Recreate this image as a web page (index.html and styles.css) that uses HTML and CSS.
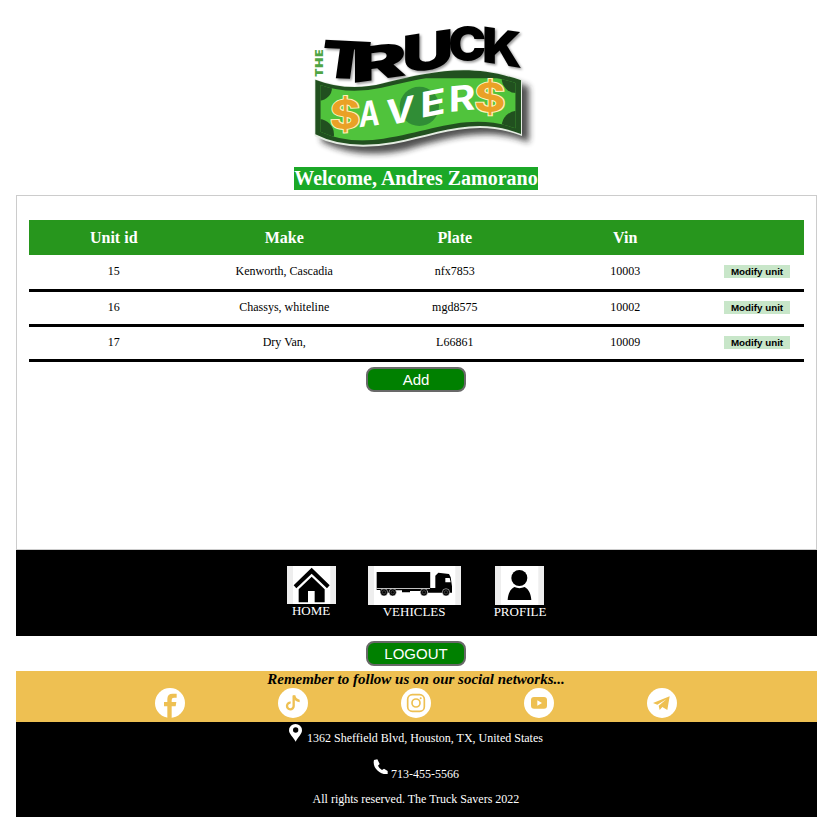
FILE: index.html
```html
<!DOCTYPE html>
<html lang="en">
<head>
<meta charset="utf-8">
<title>The Truck Savers</title>
<link rel="stylesheet" href="styles.css">
</head>
<body>
<header class="header">
  <svg class="logo" viewBox="0 0 720 450" role="img" aria-label="The Truck Savers">
    <defs>
      <filter id="soft" x="-10%" y="-20%" width="125%" height="150%"><feGaussianBlur stdDeviation="10"/></filter>
      <clipPath id="bill"><path d="M46 210Q130 240 230 218C390 183 470 155 632 204V340C490 290 380 350 235 371Q130 388 46 350Z"/></clipPath>
    </defs>
    <path d="M50 215Q170 260 300 225C430 190 520 160 672 215V382C540 328 410 375 300 405Q160 435 50 380Z" fill="#222" opacity=".8" filter="url(#soft)"/>
    <path d="M29 192Q130 230 235 203C390 164 500 143 651 194V363C510 308 400 362 265 387Q125 412 29 364Z" fill="#e4ece2"/>
    <path d="M31 194Q130 232 235 205C390 166 500 145 648 196V357C510 302 400 356 265 381Q125 406 31 358Z" fill="#21501f"/>
    <g clip-path="url(#bill)">
      <path d="M40 190H640V390H40Z" fill="#50c33c"/>
      <circle cx="343" cy="274" r="59" fill="#308d36"/>
      <circle cx="42" cy="218" r="39" fill="#21501f"/>
      <circle cx="40" cy="359" r="47" fill="#21501f"/>
      <circle cx="634" cy="190" r="44" fill="#21501f"/>
      <circle cx="638" cy="335" r="48" fill="#21501f"/>
    </g>
    <g class="savers">
      <text class="dollar" transform="matrix(1 -.05 0 1 74 343)" textLength="92" lengthAdjust="spacingAndGlyphs">$</text>
      <text transform="matrix(1 -.12 0 1 162 337)" textLength="62" lengthAdjust="spacingAndGlyphs">A</text>
      <text transform="matrix(1 -.2 0 1 243 333)" textLength="86" lengthAdjust="spacingAndGlyphs">V</text>
      <text transform="matrix(1 -.2 0 1 346 309)" textLength="76" lengthAdjust="spacingAndGlyphs">E</text>
      <text transform="matrix(1 -.1 0 1 431 291)" textLength="80" lengthAdjust="spacingAndGlyphs">R</text>
      <text class="dollar" transform="matrix(1 -.02 0 1 508 290)" textLength="94" lengthAdjust="spacingAndGlyphs">$</text>
    </g>
    <text class="the" transform="matrix(0 -1 1 0 55 185)" textLength="82" lengthAdjust="spacingAndGlyphs">THE</text>
    <g class="truck">
      <text transform="matrix(1 .05 -.14 1 40 187)" textLength="148" lengthAdjust="spacingAndGlyphs">T</text>
      <text transform="matrix(1 -.14 0 .92 138 205)" textLength="168" lengthAdjust="spacingAndGlyphs">R</text>
      <text transform="matrix(1 -.15 0 1 290 176)" textLength="156" lengthAdjust="spacingAndGlyphs">U</text>
      <text transform="matrix(1 0 0 .92 430 137)" textLength="114" lengthAdjust="spacingAndGlyphs">C</text>
      <text transform="matrix(1 .16 0 .95 531 140)" textLength="120" lengthAdjust="spacingAndGlyphs">K</text>
    </g>
  </svg>
  <h1 class="welcome">Welcome, Andres Zamorano</h1>
</header>
<main class="panel">
  <table class="units">
    <thead><tr><th>Unit id</th><th>Make</th><th>Plate</th><th>Vin</th><th class="action"></th></tr></thead>
    <tbody>
      <tr><td>15</td><td>Kenworth, Cascadia</td><td>nfx7853</td><td>10003</td><td><button class="modify">Modify unit</button></td></tr>
      <tr><td>16</td><td>Chassys, whiteline</td><td>mgd8575</td><td>10002</td><td><button class="modify">Modify unit</button></td></tr>
      <tr><td>17</td><td>Dry Van,</td><td>L66861</td><td>10009</td><td><button class="modify">Modify unit</button></td></tr>
    </tbody>
  </table>
  <div class="btn-row"><button class="btn">Add</button></div>
</main>
<nav class="nav">
  <a class="nav-item home">
    <svg width="49" height="38" viewBox="0 0 147 114"><path fill="#fff" d="M0 0h147v114H0z"/><path fill="#eee" d="M0 0h18v114H0zM130 0h17v114h-17z"/><path d="M20 58 74 5l54 53-8 9-46-44-46 44Z"/><path d="M35 70 74 32l39 38v39H83V75H63v34H35Z"/></svg>
    <span>HOME</span>
  </a>
  <a class="nav-item vehicles">
    <svg width="93" height="39" viewBox="0 0 279 117"><path fill="#fff" d="M0 0h279v117H0z"/><path fill="#eee" d="M0 0h18v117H0zM262 0h17v117h-17z"/><path d="M26 18H187V66H202V29L211 20 243 24 248 34 252 61V80H180V75H126V79H102V73H84V80H36V72H26Z"/><path fill="#fff" d="M232 36h13l3 13h-16zM26 67h160v2H26zM188 18h13v47h-13z"/><g fill="#000" stroke="#fff" stroke-width="1.5"><circle cx="48" cy="79" r="11"/><circle cx="74" cy="79" r="11"/><circle cx="168" cy="79" r="11"/><circle cx="234" cy="79" r="11"/></g><g fill="none" stroke="#aaa"><circle cx="48" cy="79" r="5"/><circle cx="74" cy="79" r="5"/><circle cx="168" cy="79" r="5"/><circle cx="234" cy="79" r="5"/></g></svg>
    <span>VEHICLES</span>
  </a>
  <a class="nav-item profile">
    <svg width="49" height="39" viewBox="0 0 147 117"><path fill="#fff" d="M0 0h147v117H0z"/><path fill="#eee" d="M0 0h18v117H0zM130 0h17v117h-17z"/><circle cx="73" cy="36" r="24"/><path d="M38 102C39 82 47 68 58 63Q73 70 89 63C101 69 108 84 109 102Z"/></svg>
    <span>PROFILE</span>
  </a>
</nav>
<div class="btn-row logout-row"><button class="btn">LOGOUT</button></div>
<section class="social">
  <h2 class="social-title">Remember to follow us on our social networks...</h2>
  <div class="social-links">
    <svg viewBox="0 0 90 90"><circle cx="45" cy="45" r="45" fill="#fff"/><path d="M37 90V55H27V42h10V33Q37 17 53 17h12v12h-8q-7 0-7 7v6h14l-2 13H50v35Z"/></svg>
    <svg viewBox="0 0 90 90"><circle cx="45" cy="45" r="45" fill="#fff"/><path d="M47 23v31a10 10 0 1 1-9-10" fill="none" stroke="#eec052" stroke-width="7"/><path d="M44 22h8q2 11 13 13v8q-9-1-14-6z"/></svg>
    <svg viewBox="0 0 90 90"><circle cx="45" cy="45" r="45" fill="#fff"/><g fill="none" stroke="#eec052" stroke-width="5"><rect x="20" y="20" width="50" height="50" rx="14"/><circle cx="45" cy="45" r="12"/></g><circle cx="59" cy="31" r="3"/></svg>
    <svg viewBox="0 0 90 90"><circle cx="45" cy="45" r="45" fill="#fff"/><rect x="21" y="27" width="48" height="35" rx="9"/><path fill="#fff" d="m40 37 14 8-14 8z"/></svg>
    <svg viewBox="0 0 90 90"><circle cx="45" cy="45" r="45" fill="#fff"/><path d="M18 45 68 25 61 66 46 57 38 66 35 53 58 34 31 50Z"/></svg>
  </div>
</section>
<footer class="footer">
  <p class="address"><svg width="13" height="18" viewBox="0 0 39 54"><path fill="#fff" d="M20 53C13 39 0 31 0 19a19.500 19 0 0 1 39 0C39 31 27 39 20 53Z"/><circle cx="20" cy="18" r="8"/></svg><span>1362 Sheffield Blvd, Houston, TX, United States</span></p>
  <p class="phone"><svg width="15" height="16" viewBox="0 0 45 48"><path fill="#fff" d="M3 3 13 1 20 15 15 20Q19 29 27 33L33 29 44 36V45C20 48-3 25 3 3Z"/></svg><span>713-455-5566</span></p>
  <p class="rights">All rights reserved. The Truck Savers 2022</p>
</footer>
</body>
</html>
```
FILE: styles.css
```css
* { box-sizing: border-box; }
body { margin: 0 13px 0 16px; background: #fff; color: #000; font-family: "Liberation Serif", serif; }
button { font-family: "Liberation Sans", sans-serif; }
.header { height: 195px; padding: 15px 1px 0 0; display: flex; flex-direction: column; align-items: center; }
.logo { width: 240px; height: 150px; margin-left: 18px; }
.truck { font: 900 155px Inter, sans-serif; filter: drop-shadow(5px 5px 3px #999); }
.savers { font: 700 105px Inter, sans-serif; fill: #fff; }
.dollar { font-weight: 700; font-size: 118px; fill: #eaa126; stroke: #fff3ba; stroke-width: 6px; paint-order: stroke; }
.the { font: 800 32px "Open Sans", sans-serif; fill: #4fa544; }
.welcome { margin: 2px 0 0; width: 244px; text-align: center; height: 23px; line-height: 23px; font-size: 20px; color: #fff; background: #1ba827; white-space: nowrap; }
.panel { height: 355px; padding: 24px 12px 0; border: 1px solid #ccc; }
.units { width: 100%; table-layout: fixed; border-collapse: separate; border-spacing: 0; text-align: center; font-size: 12px; }
.units th { width: 22%; height: 35px; padding: 0 1px 0 0; background: #27961d; color: #fff; font-size: 16px; }
.units .action { width: 12%; }
.units td { height: 35px; padding: 0 1px 2px 0; line-height: 14px; border-bottom: 3px solid #000; }
.units tbody tr:first-child td { height: 37px; }
.modify { display: block; width: 66px; height: 13px; margin: 0 auto; padding: 0; border: 0; background: #c8e6c9; font-size: 9.8px; line-height: 13px; font-weight: 700; white-space: nowrap; }
.btn-row { display: flex; justify-content: center; padding: 5px 1px 0 0; }
.btn { width: 100px; height: 25px; padding: 0; border: 2px solid #696969; border-radius: 8px; background: #008000; color: #fff; font-size: 15px; line-height: 21px; }
.nav { display: flex; justify-content: center; height: 86px; padding-top: 16px; background: #000; color: #fff; font-size: 13px; }
.nav-item { display: flex; flex-direction: column; align-items: center; line-height: 14px; }
.nav-item svg { display: block; }
.home { margin-right: 32px; }
.profile { margin-left: 33px; }
.logout-row { height: 35px; }
.social { height: 51px; background: #eec052; }
.social-title { margin: 0; padding-right: 1px; height: 17px; line-height: 17px; font-size: 15px; font-style: italic; text-align: center; }
.social-links { display: flex; justify-content: space-between; padding: 0 140px 0 139px; }
.social-links svg { width: 30px; height: 30px; fill: #eec052; }
.footer { height: 95px; padding: 2px 1px 0 0; background: #000; color: #fff; font-size: 12px; }
.footer p { display: flex; justify-content: center; margin: 0; line-height: 14px; }
.address { height: 35px; gap: 5px; }
.address span { padding-top: 7px; }
.phone { height: 33px; gap: 3px; }
.phone span { padding-top: 8px; }
```
